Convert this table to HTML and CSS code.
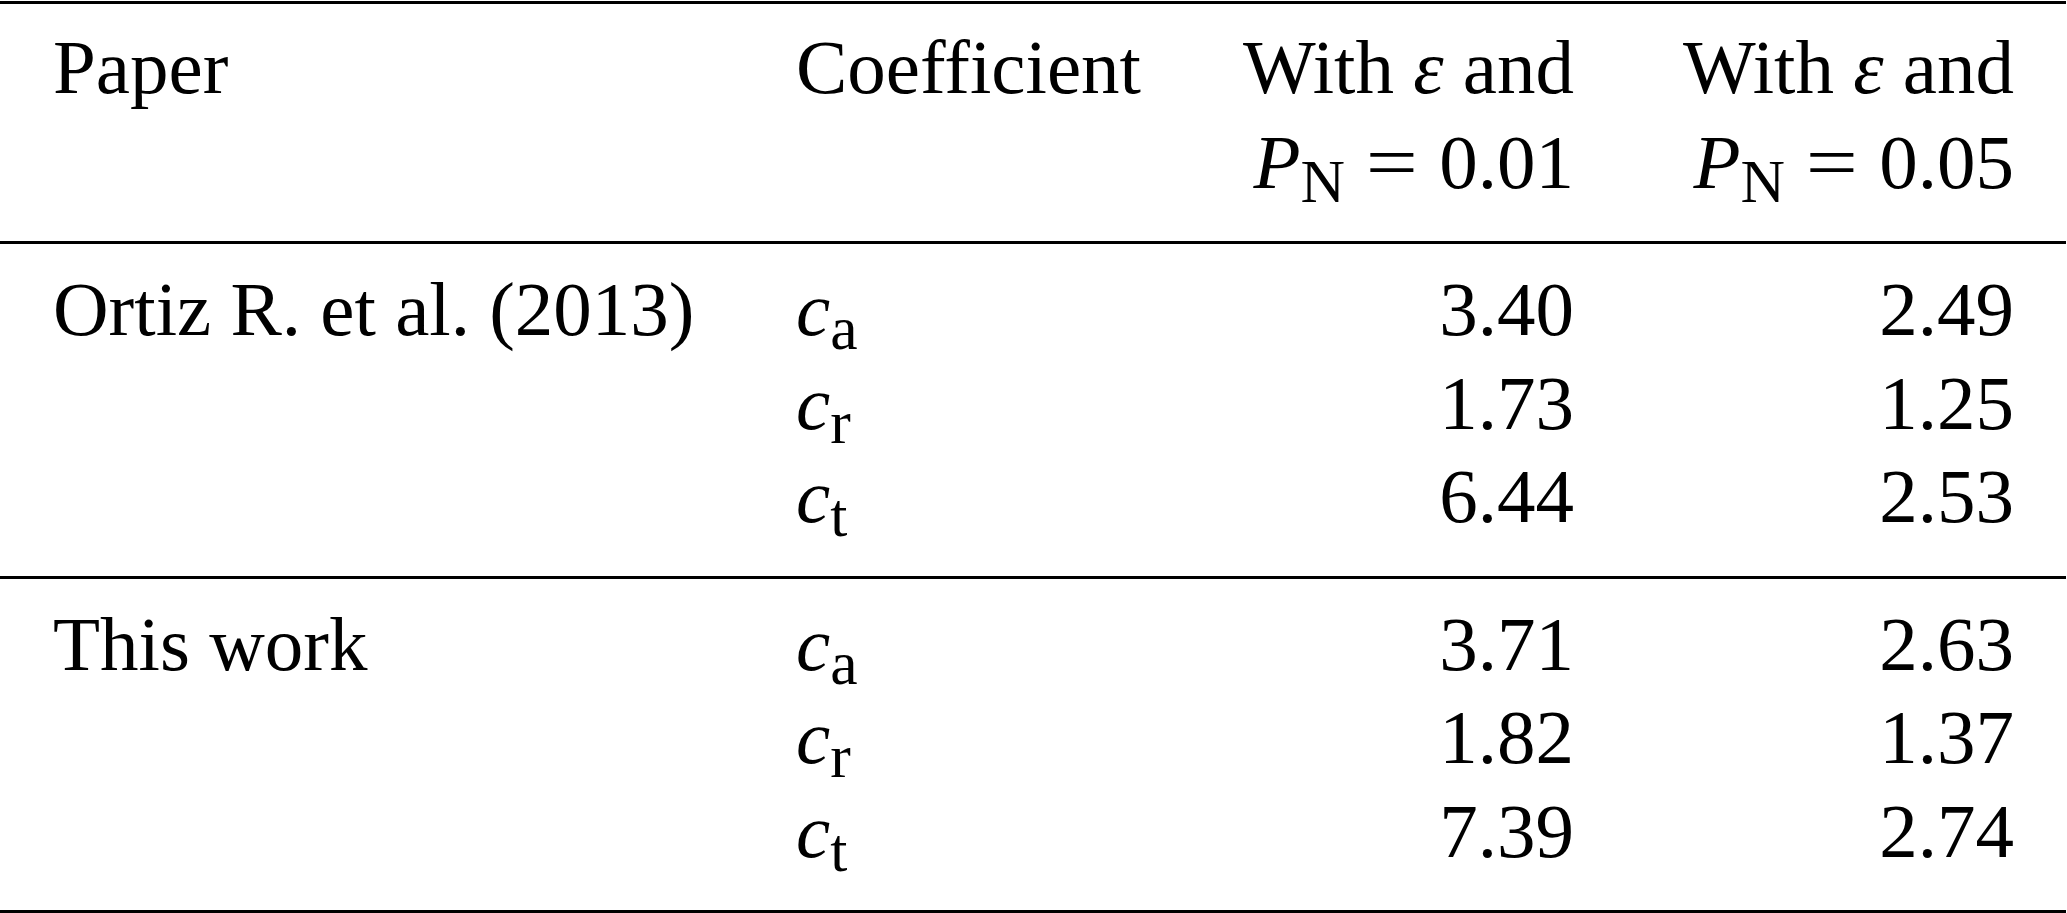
FILE: index.html
```html
<!DOCTYPE html>
<html lang="en">
  <head>
    <meta charset="UTF-8" />
    <meta name="viewport" content="width=device-width, initial-scale=1.0" />
    <title>Coefficient comparison</title>
    <link rel="stylesheet" href="styles.css">
  </head>
  <body>
    <table class="coef-table">
      <colgroup>
        <col class="col-paper">
        <col class="col-coef">
        <col class="col-val">
        <col class="col-val-last">
      </colgroup>
      <thead>
        <tr>
          <th class="paper">Paper</th>
          <th>Coefficient</th>
          <th class="num">With <i>ε</i> and<br><i>P</i><sub>N</sub> <span class="eq">=</span> 0.01</th>
          <th class="num last">With <i>ε</i> and<br><i>P</i><sub>N</sub> <span class="eq">=</span> 0.05</th>
        </tr>
      </thead>
      <tbody>
        <tr class="first">
          <td class="paper">Ortiz R. et al. (2013)</td>
          <td><i>c</i><sub>a</sub></td>
          <td class="num">3.40</td>
          <td class="num last">2.49</td>
        </tr>
        <tr>
          <td class="paper"></td>
          <td><i>c</i><sub>r</sub></td>
          <td class="num">1.73</td>
          <td class="num last">1.25</td>
        </tr>
        <tr class="end">
          <td class="paper"></td>
          <td><i>c</i><sub>t</sub></td>
          <td class="num">6.44</td>
          <td class="num last">2.53</td>
        </tr>
      </tbody>
      <tbody>
        <tr class="first">
          <td class="paper">This work</td>
          <td><i>c</i><sub>a</sub></td>
          <td class="num">3.71</td>
          <td class="num last">2.63</td>
        </tr>
        <tr>
          <td class="paper"></td>
          <td><i>c</i><sub>r</sub></td>
          <td class="num">1.82</td>
          <td class="num last">1.37</td>
        </tr>
        <tr class="end">
          <td class="paper"></td>
          <td><i>c</i><sub>t</sub></td>
          <td class="num">7.39</td>
          <td class="num last">2.74</td>
        </tr>
      </tbody>
    </table>
  </body>
</html>
```

FILE: styles.css
```css
html,
body {
  margin: 0;
  background: #fff;
}
body {
  padding-top: 1px;
}
.coef-table {
  width: 2066px;
  table-layout: fixed;
  border-collapse: separate;
  border-spacing: 0;
  font-family: "Liberation Serif", "Times New Roman", serif;
  font-size: 77px;
  line-height: 93.5px;
  color: #000;
}
.col-paper {
  width: 796px;
}
.col-coef {
  width: 340px;
}
.col-val {
  width: 438px;
}
.col-val-last {
  width: 492px;
}
th,
td {
  padding: 0;
  text-align: left;
  vertical-align: top;
  font-weight: normal;
  white-space: nowrap;
}
th {
  line-height: 95px;
  padding-top: 16px;
  padding-bottom: 31px;
  border-top: 3px solid #000;
  border-bottom: 3px solid #000;
}
.paper {
  padding-left: 53px;
}
.num {
  text-align: right;
}
.last {
  padding-right: 52px;
}
tr.first td {
  padding-top: 19px;
}
tr.end td {
  padding-bottom: 32px;
  border-bottom: 3px solid #000;
}
i {
  font-style: italic;
}
sub {
  font-size: 0.8em;
  line-height: 0;
  vertical-align: -0.22em;
}
.eq {
  display: inline-block;
  margin: 0 0.08em;
  transform: scaleX(1.2);
}
```
